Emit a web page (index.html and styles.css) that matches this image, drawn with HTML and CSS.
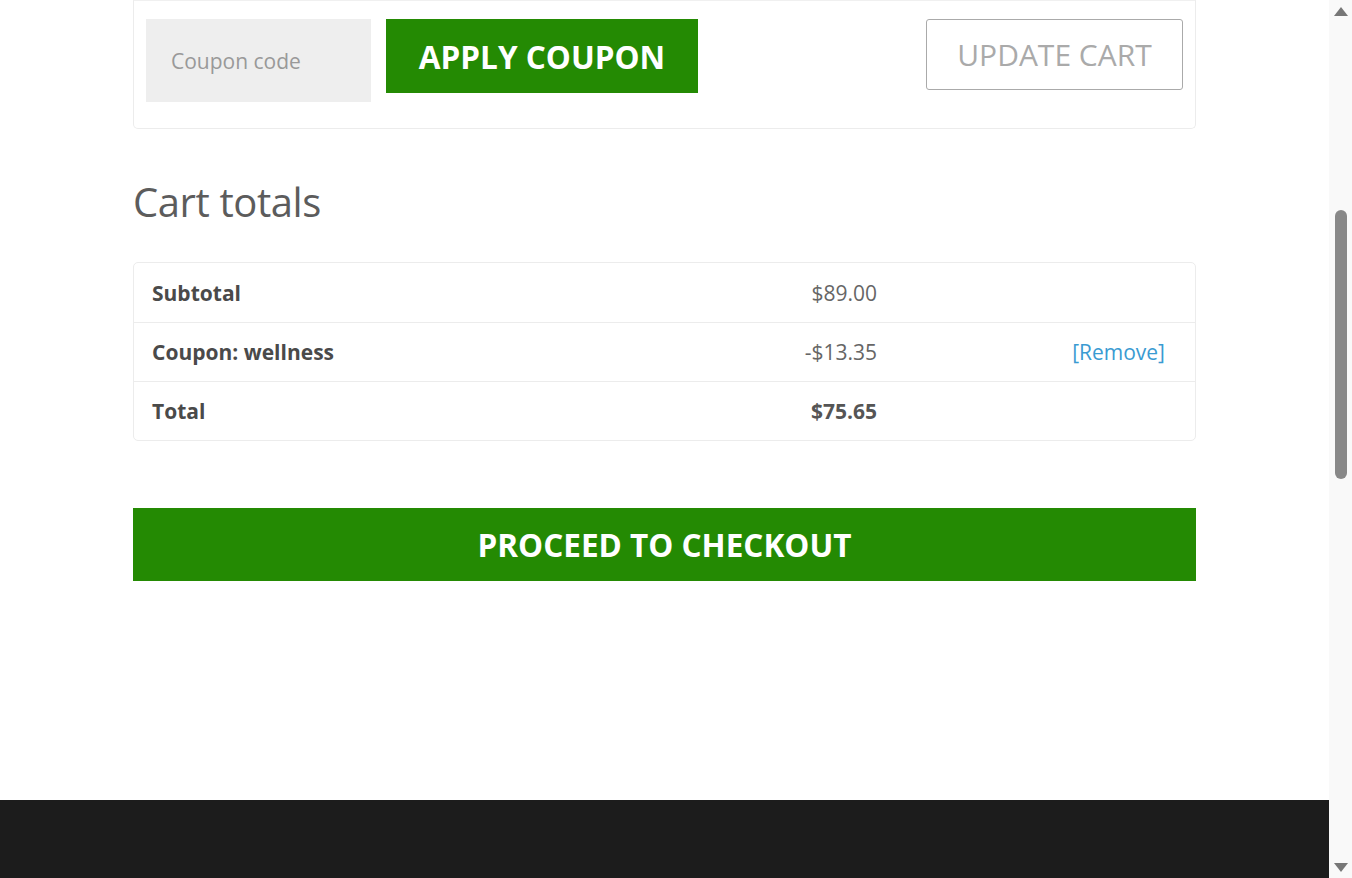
FILE: index.html
```html
<!DOCTYPE html>
<html lang="en">
<head>
    <meta charset="UTF-8">
    <meta name="viewport" content="width=device-width, initial-scale=1.0">
    <title>Cart</title>
    <link rel="stylesheet" href="styles.css">
</head>
<body>
    <div class="page">
        <main class="container">
            <div class="actions">
                <div class="coupon">
                    <input type="text" class="coupon-input" placeholder="Coupon code">
                    <button class="btn btn-green apply-btn">APPLY COUPON</button>
                </div>
                <button class="btn btn-outline">UPDATE CART</button>
            </div>

            <h2 class="totals-title">Cart totals</h2>

            <div class="totals">
                <div class="totals-row">
                    <span class="label">Subtotal</span>
                    <span class="amount">$89.00</span>
                    <span class="extra"></span>
                </div>
                <div class="totals-row">
                    <span class="label">Coupon: wellness</span>
                    <span class="amount">-$13.35</span>
                    <a href="#" class="extra remove">[Remove]</a>
                </div>
                <div class="totals-row">
                    <span class="label">Total</span>
                    <strong class="amount">$75.65</strong>
                    <span class="extra"></span>
                </div>
            </div>

            <a href="#" class="btn btn-green checkout-btn">PROCEED TO CHECKOUT</a>
        </main>

        <footer class="footer"></footer>
    </div>

    <div class="scrollbar">
        <div class="arrow arrow-up"></div>
        <div class="track">
            <div class="thumb"></div>
        </div>
        <div class="arrow arrow-down"></div>
    </div>
</body>
</html>
```

FILE: styles.css
```css
html, body {
    height: 100%;
}

body {
    margin: 0;
    display: flex;
    overflow: hidden;
    font-family: "Open Sans", "Noto Sans", Arial, sans-serif;
    color: #555;
    background-color: #fff;
}

.page {
    flex: 1;
    display: flex;
    flex-direction: column;
    min-width: 0;
}

.container {
    width: 1063px;
    margin: 0 auto;
}

/* coupon / update row */
.actions {
    display: flex;
    justify-content: space-between;
    align-items: flex-start;
    padding: 18px 12px 26px 12px;
    border: 1px solid #ececec;
    border-top-color: #f0f0f0;
    border-radius: 0 0 5px 5px;
}

.coupon {
    display: flex;
    align-items: flex-start;
    gap: 15px;
}

.coupon-input {
    box-sizing: border-box;
    width: 225px;
    height: 83px;
    padding: 0 25px;
    border: none;
    background-color: #eeeeee;
    font-family: inherit;
    font-size: 21px;
    color: #555;
    outline: none;
}

.coupon-input::placeholder {
    color: #999;
}

.btn {
    box-sizing: border-box;
    display: flex;
    align-items: center;
    justify-content: center;
    border: none;
    font-family: inherit;
    text-decoration: none;
    cursor: pointer;
}

.btn-green {
    background-color: #248a03;
    color: #fff;
    font-weight: 700;
}

.apply-btn {
    width: 312px;
    height: 74px;
    font-size: 31.5px;
}

.btn-outline {
    width: 257px;
    height: 71px;
    background-color: #fff;
    border: 1px solid #aaa;
    border-radius: 3px;
    color: #aaa;
    font-size: 30px;
    font-weight: 400;
}

/* totals */
.totals-title {
    margin: 48px 0 35px 0;
    font-size: 40px;
    line-height: 50px;
    font-weight: 400;
    letter-spacing: -0.4px;
    color: #5c5c5c;
}

.totals {
    border: 1px solid #ececec;
    border-radius: 5px;
}

.totals-row {
    box-sizing: border-box;
    display: grid;
    grid-template-columns: 1fr 200px 288px;
    align-items: center;
    height: 59px;
    padding: 0 30px 0 18px;
    font-size: 21px;
}

.totals-row + .totals-row {
    border-top: 1px solid #ececec;
}

.label {
    font-weight: 700;
    color: #4a4a4a;
}

.amount {
    text-align: right;
    color: #666;
}

strong.amount {
    color: #555;
}

.extra {
    text-align: right;
}

.remove {
    color: #3a9bd2;
    text-decoration: none;
}

.checkout-btn {
    height: 73px;
    margin-top: 67px;
    font-size: 31.5px;
}

/* footer */
.footer {
    margin-top: 219px;
    flex: 1;
    background-color: #1c1c1c;
}

/* fake scrollbar */
.scrollbar {
    width: 23px;
    flex-shrink: 0;
    display: flex;
    flex-direction: column;
    align-items: center;
    background-color: #f9f9f9;
}

.arrow {
    width: 0;
    height: 0;
    border-left: 7px solid transparent;
    border-right: 7px solid transparent;
}

.arrow-up {
    margin-top: 7px;
    border-bottom: 9px solid #777;
}

.arrow-down {
    margin-bottom: 6px;
    border-top: 9px solid #777;
}

.track {
    flex: 1;
    width: 100%;
    display: flex;
    justify-content: center;
}

.thumb {
    width: 12px;
    height: 269px;
    margin-top: 194px;
    background-color: #888;
    border-radius: 6px;
}
```
